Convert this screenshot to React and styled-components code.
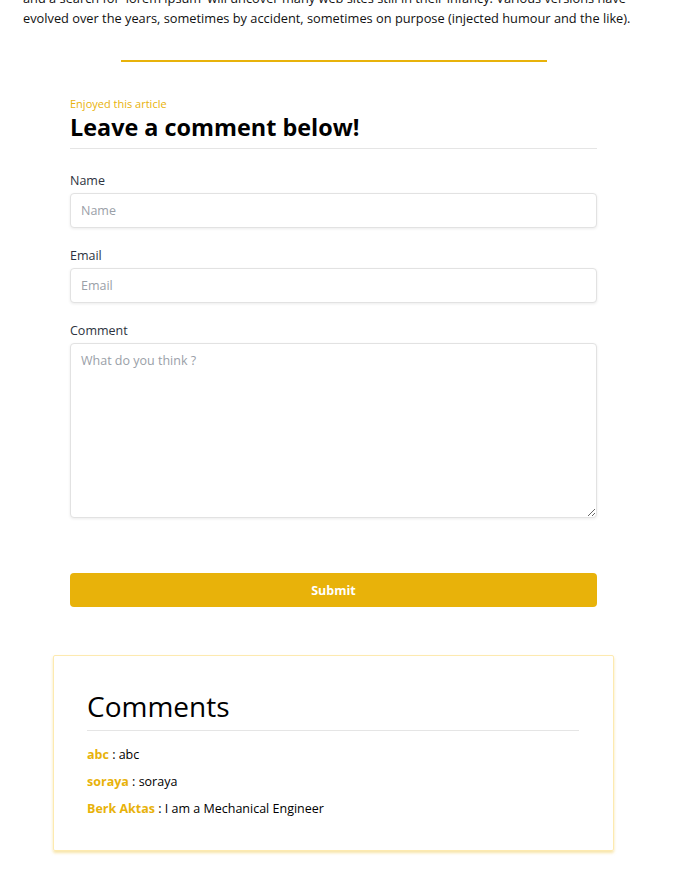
import React from 'react';
import styled, { createGlobalStyle } from 'styled-components';

const accent = '#e8b20a';

const GlobalStyle = createGlobalStyle`
  body {
    margin: 0;
    background: #fff;
    font-family: 'Open Sans', 'Noto Sans', sans-serif;
    color: #000;
  }
`;

const Page = styled.div`
  width: 667px;
  display: flex;
  flex-direction: column;
  align-items: center;
`;

const Article = styled.p`
  align-self: stretch;
  margin: -12px 0 0;
  padding: 0 23px;
  font-size: 12.8px;
  line-height: 20px;
  color: #111;
`;

const Rule = styled.hr`
  width: 426px;
  border: 0;
  height: 2px;
  background: ${accent};
  margin: 32px 0 0;
`;

const Form = styled.form`
  width: 527px;
  margin-top: 35px;
  display: flex;
  flex-direction: column;
`;

const Kicker = styled.span`
  font-size: 11px;
  color: ${accent};
  line-height: 14px;
`;

const Heading = styled.h2`
  margin: 1px 0 0;
  font-size: 23.4px;
  font-weight: 700;
  line-height: 30px;
  padding-bottom: 6px;
  border-bottom: 1px solid #e5e5e5;
`;

const Field = styled.div`
  display: flex;
  flex-direction: column;
  margin-top: ${({ $first }) => ($first ? '23px' : '19px')};
`;

const Label = styled.label`
  font-size: 12.5px;
  color: #2d3340;
  line-height: 18px;
  margin-bottom: 3px;
`;

const inputBase = `
  box-sizing: border-box;
  width: 100%;
  border: 1px solid #e2e2e2;
  border-radius: 4px;
  box-shadow: 0 1px 3px rgba(0, 0, 0, 0.08);
  padding: 0 10px;
  font-family: 'Open Sans', 'Noto Sans', sans-serif;
  font-size: 12.5px;
  color: #333;
  outline: none;
  &::placeholder {
    color: #9aa0a8;
  }
`;

const Input = styled.input`
  ${inputBase}
  height: 35px;
`;

const TextArea = styled.textarea`
  ${inputBase}
  height: 175px;
  padding-top: 8px;
  resize: vertical;
`;

const Submit = styled.button`
  margin-top: 55px;
  height: 34px;
  border: 0;
  border-radius: 4px;
  background: ${accent};
  color: #fff;
  font-family: 'Open Sans', 'Noto Sans', sans-serif;
  font-weight: 700;
  font-size: 12.5px;
`;

const Card = styled.section`
  box-sizing: border-box;
  width: 561px;
  margin: 48px 0 28px;
  padding: 30px 34px 32px 33px;
  border: 1px solid #fdeab0;
  border-radius: 2px;
  box-shadow: 0 2px 3px rgba(232, 178, 10, 0.35);
`;

const CardTitle = styled.h3`
  margin: 0;
  font-size: 28px;
  font-weight: 400;
  line-height: 40px;
  padding-bottom: 4px;
  border-bottom: 1px solid #e5e5e5;
`;

const CommentList = styled.div`
  display: flex;
  flex-direction: column;
  gap: 9px;
  margin-top: 15px;
`;

const CommentRow = styled.div`
  font-size: 12.5px;
  line-height: 18px;
`;

const Author = styled.span`
  color: ${accent};
  font-weight: 700;
`;

const comments = [
  { author: 'abc', text: 'abc' },
  { author: 'soraya', text: 'soraya' },
  { author: 'Berk Aktas', text: 'I am a Mechanical Engineer' },
];

function App() {
  return (
    <Page>
      <GlobalStyle />
      <Article>
        and a search for 'lorem ipsum' will uncover many web sites still in their infancy. Various versions have
        evolved over the years, sometimes by accident, sometimes on purpose (injected humour and the like).
      </Article>
      <Rule />
      <Form onSubmit={(e) => e.preventDefault()}>
        <Kicker>Enjoyed this article</Kicker>
        <Heading>Leave a comment below!</Heading>
        <Field $first>
          <Label>Name</Label>
          <Input placeholder="Name" />
        </Field>
        <Field>
          <Label>Email</Label>
          <Input placeholder="Email" />
        </Field>
        <Field>
          <Label>Comment</Label>
          <TextArea placeholder="What do you think ?" />
        </Field>
        <Submit type="submit">Submit</Submit>
      </Form>
      <Card>
        <CardTitle>Comments</CardTitle>
        <CommentList>
          {comments.map((c) => (
            <CommentRow key={c.author}>
              <Author>{c.author} </Author>: {c.text}
            </CommentRow>
          ))}
        </CommentList>
      </Card>
    </Page>
  );
}

export default App;
